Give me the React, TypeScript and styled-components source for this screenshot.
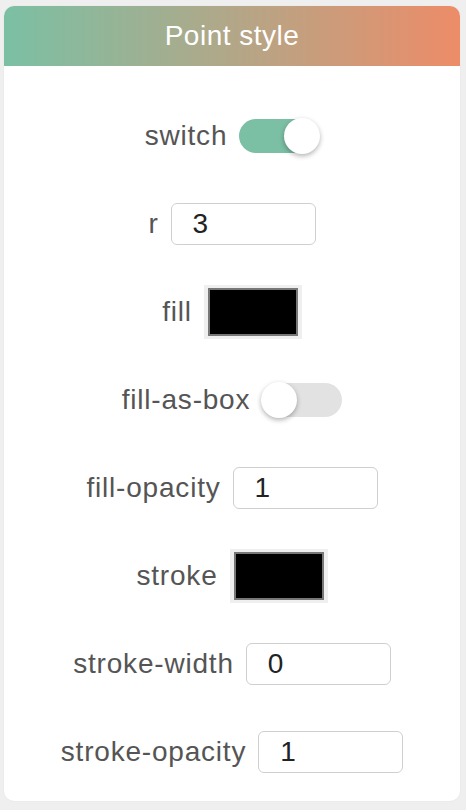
import React from "react";
import styled, { createGlobalStyle } from "styled-components";

const Global = createGlobalStyle`
  html, body { margin: 0; padding: 0; background: #efefef; }
  body { font-family: "Liberation Sans", Arial, sans-serif; }
  * { box-sizing: border-box; }
`;

const Page = styled.div`
  padding: 6px 6px 9px 4px;
`;

const Card = styled.div`
  width: 456px;
  background: #ffffff;
  border-radius: 10px;
  overflow: hidden;
  box-shadow: 0 0 2px rgba(0, 0, 0, 0.06);
`;

const Header = styled.div`
  height: 60px;
  display: flex;
  align-items: center;
  justify-content: center;
  background: linear-gradient(90deg, #7bc0a4 0%, #b2a788 50%, #ed8c68 100%);
  color: #ffffff;
  font-size: 28px;
  letter-spacing: 0.5px;
`;

const Body = styled.div`
  display: flex;
  flex-direction: column;
  padding: 26px 0 5px;
`;

const Row = styled.div`
  height: 88px;
  display: flex;
  align-items: center;
  justify-content: center;
  gap: 12px;
`;

const Label = styled.span`
  font-size: 28px;
  letter-spacing: 0.8px;
  color: #555555;
`;

const NumberBox = styled.div`
  width: 145px;
  height: 42px;
  border: 1.5px solid #cfcfcf;
  border-radius: 6px;
  display: flex;
  align-items: center;
  padding-left: 21px;
  font-size: 28px;
  color: #222222;
`;

const Swatch = styled.div`
  width: 98px;
  height: 54px;
  background: #efefef;
  padding: 3px 4px;
  display: flex;
`;

const SwatchInner = styled.div<{ $color: string }>`
  flex: 1;
  background: ${(p) => p.$color};
  border: 2px solid #777777;
`;

const Track = styled.div<{ $on: boolean }>`
  position: relative;
  width: 80px;
  height: 34px;
  border-radius: 17px;
  background: ${(p) => (p.$on ? "#7bbfa4" : "#e2e2e2")};
`;

const Knob = styled.div<{ $on: boolean }>`
  position: absolute;
  top: -1px;
  ${(p) => (p.$on ? "right: -1px;" : "left: -1px;")}
  width: 36px;
  height: 36px;
  border-radius: 50%;
  background: #ffffff;
  box-shadow: 0 2px 5px rgba(0, 0, 0, 0.3);
`;

const Toggle = ({ on }: { on: boolean }) => (
  <Track $on={on}>
    <Knob $on={on} />
  </Track>
);

export default function App() {
  return (
    <>
      <Global />
      <Page>
        <Card>
          <Header>Point style</Header>
          <Body>
            <Row>
              <Label>switch</Label>
              <Toggle on />
            </Row>
            <Row>
              <Label>r</Label>
              <NumberBox>3</NumberBox>
            </Row>
            <Row>
              <Label>fill</Label>
              <Swatch>
                <SwatchInner $color="#000000" />
              </Swatch>
            </Row>
            <Row>
              <Label>fill-as-box</Label>
              <Toggle on={false} />
            </Row>
            <Row>
              <Label>fill-opacity</Label>
              <NumberBox>1</NumberBox>
            </Row>
            <Row>
              <Label>stroke</Label>
              <Swatch>
                <SwatchInner $color="#000000" />
              </Swatch>
            </Row>
            <Row>
              <Label>stroke-width</Label>
              <NumberBox>0</NumberBox>
            </Row>
            <Row>
              <Label>stroke-opacity</Label>
              <NumberBox>1</NumberBox>
            </Row>
          </Body>
        </Card>
      </Page>
    </>
  );
}
